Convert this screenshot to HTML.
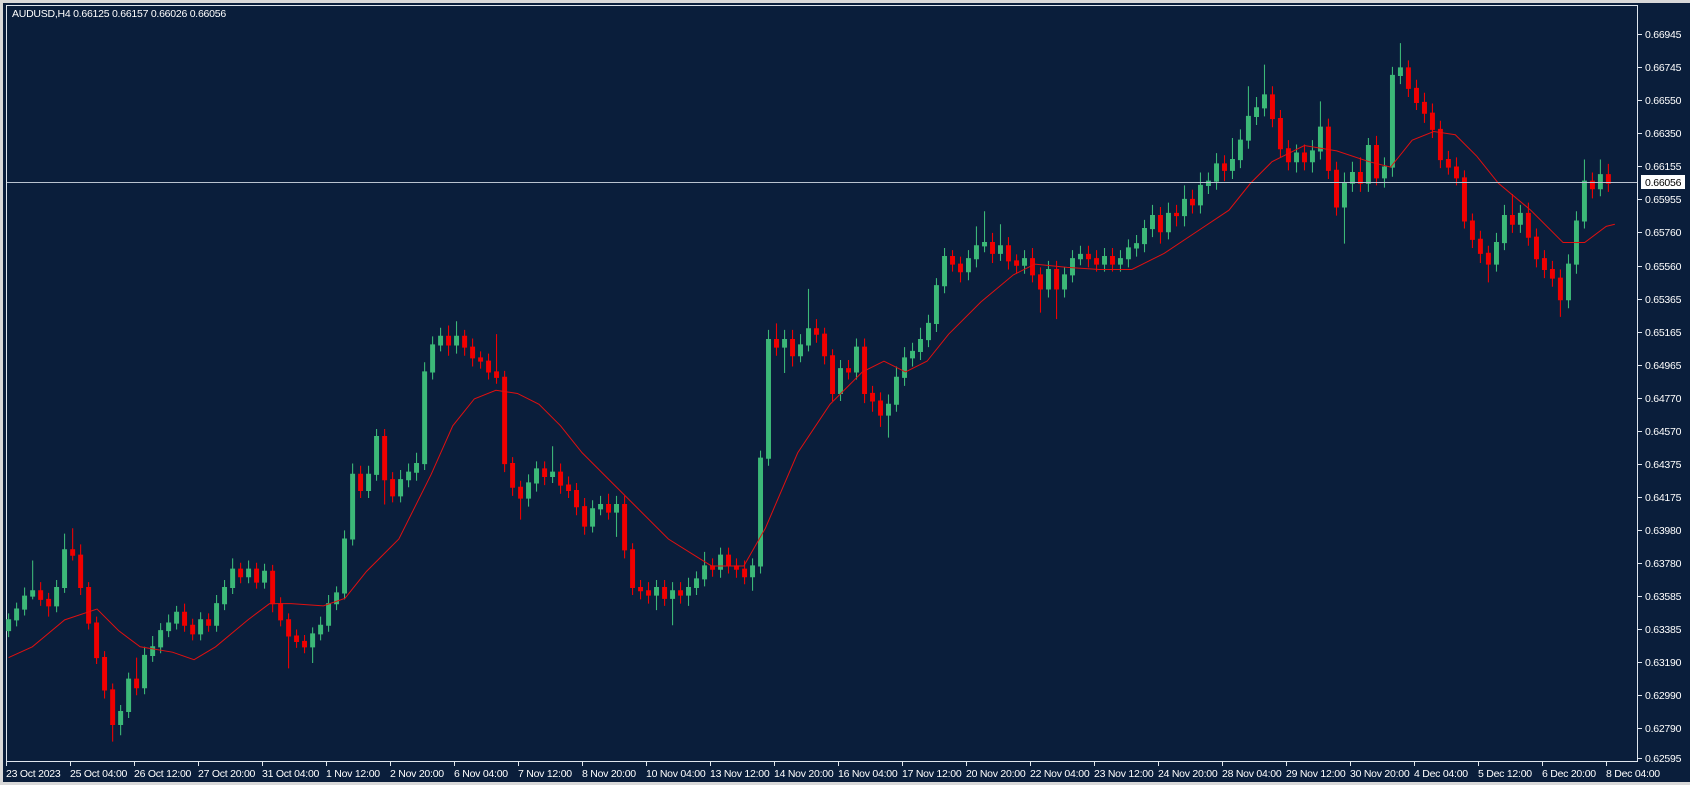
<!DOCTYPE html>
<html><head><meta charset="utf-8"><style>
html,body{margin:0;padding:0;width:1690px;height:785px;overflow:hidden;background:#d8d8d8}
svg{display:block}
text{font-family:"Liberation Sans",sans-serif;font-size:10.5px;letter-spacing:-0.25px;fill:#fff}
.g{fill:#3cb878;stroke:#3cb878;stroke-width:1}
.r{fill:#f10000;stroke:#f10000;stroke-width:1}
</style></head><body>
<svg width="1690" height="785" xmlns="http://www.w3.org/2000/svg">
<rect x="3" y="3" width="1687" height="779" fill="#0a1e3b"/>
<rect x="6.5" y="5.5" width="1631" height="756" fill="none" stroke="#dfe6ee" stroke-width="1"/>
<g transform="scale(1.078)">
<path class="g" d="M8 569V591M6.2 575h3.6V585h-3.6Z"/>
<path class="g" d="M15.4 559V581M13.6 565h3.6V575h-3.6Z"/>
<path class="g" d="M22.8 545V571M21 553h3.6V565h-3.6Z"/>
<path class="g" d="M30.3 520V556M28.5 548h3.6V553h-3.6Z"/>
<path class="r" d="M37.7 540V562M35.9 548h3.6V556h-3.6Z"/>
<path class="r" d="M45.1 550V572M43.3 556h3.6V562h-3.6Z"/>
<path class="g" d="M52.5 538V568M50.7 545h3.6V562h-3.6Z"/>
<path class="g" d="M59.9 495V550M58.1 510h3.6V545h-3.6Z"/>
<path class="r" d="M67.4 490V520M65.6 510h3.6V515h-3.6Z"/>
<path class="r" d="M74.8 505V552M73 515h3.6V545h-3.6Z"/>
<path class="r" d="M82.2 540V584M80.4 545h3.6V578h-3.6Z"/>
<path class="r" d="M89.6 572V616M87.8 578h3.6V610h-3.6Z"/>
<path class="r" d="M97 604V648M95.2 610h3.6V640h-3.6Z"/>
<path class="r" d="M104.5 634V688M102.7 640h3.6V672h-3.6Z"/>
<path class="g" d="M111.9 654V682M110.1 660h3.6V672h-3.6Z"/>
<path class="g" d="M119.3 624V666M117.5 630h3.6V660h-3.6Z"/>
<path class="r" d="M126.7 610V645M124.9 630h3.6V638h-3.6Z"/>
<path class="g" d="M134.1 600V644M132.3 608h3.6V638h-3.6Z"/>
<path class="g" d="M141.6 590V614M139.8 600h3.6V608h-3.6Z"/>
<path class="g" d="M149 578V606M147.2 585h3.6V600h-3.6Z"/>
<path class="g" d="M156.4 570V591M154.6 578h3.6V585h-3.6Z"/>
<path class="g" d="M163.8 562V584M162 568h3.6V578h-3.6Z"/>
<path class="r" d="M171.2 560V586M169.4 568h3.6V580h-3.6Z"/>
<path class="r" d="M178.7 574V594M176.9 580h3.6V588h-3.6Z"/>
<path class="g" d="M186.1 568V594M184.3 575h3.6V588h-3.6Z"/>
<path class="r" d="M193.5 569V586M191.7 575h3.6V580h-3.6Z"/>
<path class="g" d="M200.9 552V586M199.1 560h3.6V580h-3.6Z"/>
<path class="g" d="M208.3 538V566M206.5 545h3.6V560h-3.6Z"/>
<path class="g" d="M215.8 518V551M214 528h3.6V545h-3.6Z"/>
<path class="r" d="M223.2 522V541M221.4 528h3.6V535h-3.6Z"/>
<path class="g" d="M230.6 520V541M228.8 528h3.6V535h-3.6Z"/>
<path class="r" d="M238 522V546M236.2 528h3.6V540h-3.6Z"/>
<path class="g" d="M245.4 523V546M243.6 530h3.6V540h-3.6Z"/>
<path class="r" d="M252.9 524V568M251.1 530h3.6V560h-3.6Z"/>
<path class="r" d="M260.3 554V581M258.5 560h3.6V575h-3.6Z"/>
<path class="r" d="M267.7 569V620M265.9 575h3.6V590h-3.6Z"/>
<path class="r" d="M275.1 584V601M273.3 590h3.6V595h-3.6Z"/>
<path class="r" d="M282.5 589V606M280.7 595h3.6V600h-3.6Z"/>
<path class="g" d="M290 582V615M288.2 588h3.6V600h-3.6Z"/>
<path class="g" d="M297.4 572V594M295.6 580h3.6V588h-3.6Z"/>
<path class="g" d="M304.8 552V586M303 560h3.6V580h-3.6Z"/>
<path class="g" d="M312.2 544V566M310.4 550h3.6V560h-3.6Z"/>
<path class="g" d="M319.6 492V556M317.8 500h3.6V550h-3.6Z"/>
<path class="g" d="M327.1 430V506M325.3 440h3.6V500h-3.6Z"/>
<path class="r" d="M334.5 432V462M332.7 440h3.6V455h-3.6Z"/>
<path class="g" d="M341.9 432V462M340.1 440h3.6V455h-3.6Z"/>
<path class="g" d="M349.3 398V446M347.5 405h3.6V440h-3.6Z"/>
<path class="r" d="M356.8 398V468M355 405h3.6V445h-3.6Z"/>
<path class="r" d="M364.2 438V466M362.4 445h3.6V460h-3.6Z"/>
<path class="g" d="M371.6 436V466M369.8 445h3.6V460h-3.6Z"/>
<path class="g" d="M379 430V452M377.2 438h3.6V445h-3.6Z"/>
<path class="g" d="M386.4 420V446M384.6 430h3.6V438h-3.6Z"/>
<path class="g" d="M393.9 336V436M392.1 345h3.6V430h-3.6Z"/>
<path class="g" d="M401.3 312V352M399.5 320h3.6V345h-3.6Z"/>
<path class="g" d="M408.7 304V326M406.9 312h3.6V320h-3.6Z"/>
<path class="r" d="M416.1 302V330M414.3 312h3.6V320h-3.6Z"/>
<path class="g" d="M423.5 298V328M421.7 312h3.6V320h-3.6Z"/>
<path class="r" d="M431 306V330M429.2 312h3.6V322h-3.6Z"/>
<path class="r" d="M438.4 314V340M436.6 322h3.6V332h-3.6Z"/>
<path class="r" d="M445.8 326V342M444 332h3.6V335h-3.6Z"/>
<path class="r" d="M453.2 328V352M451.4 335h3.6V345h-3.6Z"/>
<path class="r" d="M460.6 310V356M458.8 345h3.6V350h-3.6Z"/>
<path class="r" d="M468.1 344V438M466.3 350h3.6V430h-3.6Z"/>
<path class="r" d="M475.5 424V460M473.7 430h3.6V452h-3.6Z"/>
<path class="r" d="M482.9 446V482M481.1 452h3.6V462h-3.6Z"/>
<path class="g" d="M490.3 440V470M488.5 448h3.6V462h-3.6Z"/>
<path class="g" d="M497.7 428V456M495.9 435h3.6V448h-3.6Z"/>
<path class="r" d="M505.2 428V450M503.4 435h3.6V442h-3.6Z"/>
<path class="g" d="M512.6 414V448M510.8 438h3.6V442h-3.6Z"/>
<path class="r" d="M520 430V458M518.2 438h3.6V450h-3.6Z"/>
<path class="r" d="M527.4 442V462M525.6 450h3.6V455h-3.6Z"/>
<path class="r" d="M534.8 448V478M533 455h3.6V470h-3.6Z"/>
<path class="r" d="M542.3 462V496M540.5 470h3.6V488h-3.6Z"/>
<path class="g" d="M549.7 464V494M547.9 472h3.6V488h-3.6Z"/>
<path class="g" d="M557.1 460V478M555.3 468h3.6V472h-3.6Z"/>
<path class="r" d="M564.5 458V482M562.7 468h3.6V475h-3.6Z"/>
<path class="g" d="M571.9 460V498M570.1 468h3.6V475h-3.6Z"/>
<path class="r" d="M579.4 460V518M577.6 468h3.6V510h-3.6Z"/>
<path class="r" d="M586.8 504V552M585 510h3.6V545h-3.6Z"/>
<path class="r" d="M594.2 538V556M592.4 545h3.6V548h-3.6Z"/>
<path class="r" d="M601.6 540V560M599.8 548h3.6V552h-3.6Z"/>
<path class="g" d="M609 538V566M607.2 545h3.6V552h-3.6Z"/>
<path class="r" d="M616.5 538V562M614.7 545h3.6V555h-3.6Z"/>
<path class="g" d="M623.9 540V580M622.1 548h3.6V555h-3.6Z"/>
<path class="r" d="M631.3 540V560M629.5 548h3.6V552h-3.6Z"/>
<path class="g" d="M638.7 536V562M636.9 545h3.6V552h-3.6Z"/>
<path class="g" d="M646.1 530V552M644.3 537h3.6V545h-3.6Z"/>
<path class="g" d="M653.6 512V544M651.8 525h3.6V537h-3.6Z"/>
<path class="r" d="M661 518V535M659.2 525h3.6V528h-3.6Z"/>
<path class="g" d="M668.4 508V536M666.6 515h3.6V528h-3.6Z"/>
<path class="r" d="M675.8 508V532M674 515h3.6V525h-3.6Z"/>
<path class="r" d="M683.2 518V536M681.4 525h3.6V528h-3.6Z"/>
<path class="r" d="M690.7 520V542M688.9 528h3.6V535h-3.6Z"/>
<path class="g" d="M698.1 518V548M696.3 525h3.6V535h-3.6Z"/>
<path class="g" d="M705.5 418V532M703.7 425h3.6V525h-3.6Z"/>
<path class="g" d="M712.9 306V432M711.1 315h3.6V425h-3.6Z"/>
<path class="r" d="M720.3 300V330M718.5 315h3.6V322h-3.6Z"/>
<path class="g" d="M727.8 306V346M726 315h3.6V322h-3.6Z"/>
<path class="r" d="M735.2 306V340M733.4 315h3.6V330h-3.6Z"/>
<path class="g" d="M742.6 310V336M740.8 320h3.6V330h-3.6Z"/>
<path class="g" d="M750 268V326M748.2 305h3.6V320h-3.6Z"/>
<path class="r" d="M757.4 296V318M755.6 305h3.6V310h-3.6Z"/>
<path class="r" d="M764.9 304V338M763.1 310h3.6V330h-3.6Z"/>
<path class="r" d="M772.3 324V372M770.5 330h3.6V365h-3.6Z"/>
<path class="g" d="M779.7 334V372M777.9 342h3.6V365h-3.6Z"/>
<path class="r" d="M787.1 334V352M785.3 342h3.6V345h-3.6Z"/>
<path class="g" d="M794.5 314V352M792.7 322h3.6V345h-3.6Z"/>
<path class="r" d="M802 314V374M800.2 322h3.6V365h-3.6Z"/>
<path class="r" d="M809.4 358V382M807.6 365h3.6V372h-3.6Z"/>
<path class="r" d="M816.8 364V396M815 372h3.6V385h-3.6Z"/>
<path class="g" d="M824.2 366V406M822.4 375h3.6V385h-3.6Z"/>
<path class="g" d="M831.6 340V382M829.8 350h3.6V375h-3.6Z"/>
<path class="g" d="M839.1 322V358M837.3 332h3.6V350h-3.6Z"/>
<path class="g" d="M846.5 318V340M844.7 326h3.6V332h-3.6Z"/>
<path class="g" d="M853.9 304V334M852.1 315h3.6V326h-3.6Z"/>
<path class="g" d="M861.3 292V322M859.5 300h3.6V315h-3.6Z"/>
<path class="g" d="M868.7 258V308M866.9 265h3.6V300h-3.6Z"/>
<path class="g" d="M876.2 230V272M874.4 238h3.6V265h-3.6Z"/>
<path class="r" d="M883.6 232V252M881.8 238h3.6V245h-3.6Z"/>
<path class="r" d="M891 238V262M889.2 245h3.6V252h-3.6Z"/>
<path class="g" d="M898.4 232V260M896.6 240h3.6V252h-3.6Z"/>
<path class="g" d="M905.8 210V248M904 228h3.6V240h-3.6Z"/>
<path class="g" d="M913.3 196V234M911.5 225h3.6V228h-3.6Z"/>
<path class="r" d="M920.7 216V244M918.9 225h3.6V235h-3.6Z"/>
<path class="g" d="M928.1 208V242M926.3 228h3.6V235h-3.6Z"/>
<path class="r" d="M935.5 220V250M933.7 228h3.6V242h-3.6Z"/>
<path class="r" d="M943 236V254M941.2 242h3.6V246h-3.6Z"/>
<path class="g" d="M950.4 232V254M948.6 240h3.6V246h-3.6Z"/>
<path class="r" d="M957.8 230V262M956 240h3.6V255h-3.6Z"/>
<path class="r" d="M965.2 248V290M963.4 255h3.6V268h-3.6Z"/>
<path class="g" d="M972.6 242V276M970.8 250h3.6V268h-3.6Z"/>
<path class="r" d="M980.1 242V296M978.3 250h3.6V268h-3.6Z"/>
<path class="g" d="M987.5 248V276M985.7 255h3.6V268h-3.6Z"/>
<path class="g" d="M994.9 232V262M993.1 240h3.6V255h-3.6Z"/>
<path class="g" d="M1002.3 228V246M1000.5 236h3.6V240h-3.6Z"/>
<path class="r" d="M1009.7 228V248M1007.9 236h3.6V240h-3.6Z"/>
<path class="r" d="M1017.2 232V252M1015.4 240h3.6V245h-3.6Z"/>
<path class="g" d="M1024.6 230V252M1022.8 238h3.6V245h-3.6Z"/>
<path class="r" d="M1032 230V252M1030.2 238h3.6V245h-3.6Z"/>
<path class="g" d="M1039.4 232V252M1037.6 240h3.6V245h-3.6Z"/>
<path class="g" d="M1046.8 222V248M1045 230h3.6V240h-3.6Z"/>
<path class="g" d="M1054.3 218V238M1052.5 226h3.6V230h-3.6Z"/>
<path class="g" d="M1061.7 204V234M1059.9 212h3.6V226h-3.6Z"/>
<path class="g" d="M1069.1 190V220M1067.3 200h3.6V212h-3.6Z"/>
<path class="r" d="M1076.5 192V226M1074.7 200h3.6V215h-3.6Z"/>
<path class="g" d="M1083.9 188V222M1082.1 198h3.6V215h-3.6Z"/>
<path class="r" d="M1091.4 190V210M1089.6 198h3.6V200h-3.6Z"/>
<path class="g" d="M1098.8 172V210M1097 185h3.6V200h-3.6Z"/>
<path class="r" d="M1106.2 176V198M1104.4 185h3.6V190h-3.6Z"/>
<path class="g" d="M1113.6 160V198M1111.8 172h3.6V190h-3.6Z"/>
<path class="g" d="M1121 160V180M1119.2 168h3.6V172h-3.6Z"/>
<path class="g" d="M1128.5 142V176M1126.7 152h3.6V168h-3.6Z"/>
<path class="r" d="M1135.9 144V168M1134.1 152h3.6V158h-3.6Z"/>
<path class="g" d="M1143.3 128V166M1141.5 148h3.6V158h-3.6Z"/>
<path class="g" d="M1150.7 120V156M1148.9 130h3.6V148h-3.6Z"/>
<path class="g" d="M1158.1 80V138M1156.3 108h3.6V130h-3.6Z"/>
<path class="g" d="M1165.6 90V116M1163.8 100h3.6V108h-3.6Z"/>
<path class="g" d="M1173 60V108M1171.2 88h3.6V100h-3.6Z"/>
<path class="r" d="M1180.4 80V118M1178.6 88h3.6V110h-3.6Z"/>
<path class="r" d="M1187.8 102V146M1186 110h3.6V138h-3.6Z"/>
<path class="r" d="M1195.2 130V158M1193.4 138h3.6V150h-3.6Z"/>
<path class="g" d="M1202.7 134V160M1200.9 142h3.6V150h-3.6Z"/>
<path class="r" d="M1210.1 134V158M1208.3 142h3.6V150h-3.6Z"/>
<path class="g" d="M1217.5 130V160M1215.7 140h3.6V150h-3.6Z"/>
<path class="g" d="M1224.9 94V148M1223.1 118h3.6V140h-3.6Z"/>
<path class="r" d="M1232.3 110V166M1230.5 118h3.6V158h-3.6Z"/>
<path class="r" d="M1239.8 150V200M1238 158h3.6V192h-3.6Z"/>
<path class="g" d="M1247.2 160V226M1245.4 170h3.6V192h-3.6Z"/>
<path class="g" d="M1254.6 150V178M1252.8 160h3.6V170h-3.6Z"/>
<path class="r" d="M1262 146V178M1260.2 160h3.6V170h-3.6Z"/>
<path class="g" d="M1269.4 128V178M1267.6 135h3.6V170h-3.6Z"/>
<path class="r" d="M1276.9 126V172M1275.1 135h3.6V165h-3.6Z"/>
<path class="g" d="M1284.3 146V174M1282.5 155h3.6V165h-3.6Z"/>
<path class="g" d="M1291.7 62V164M1289.9 70h3.6V155h-3.6Z"/>
<path class="g" d="M1299.1 40V78M1297.3 63h3.6V70h-3.6Z"/>
<path class="r" d="M1306.5 56V90M1304.7 63h3.6V82h-3.6Z"/>
<path class="r" d="M1314 74V102M1312.2 82h3.6V95h-3.6Z"/>
<path class="r" d="M1321.4 86V114M1319.6 95h3.6V105h-3.6Z"/>
<path class="r" d="M1328.8 96V128M1327 105h3.6V120h-3.6Z"/>
<path class="r" d="M1336.2 112V156M1334.4 120h3.6V148h-3.6Z"/>
<path class="r" d="M1343.6 140V162M1341.8 148h3.6V155h-3.6Z"/>
<path class="r" d="M1351.1 146V172M1349.3 155h3.6V165h-3.6Z"/>
<path class="r" d="M1358.5 158V212M1356.7 165h3.6V205h-3.6Z"/>
<path class="r" d="M1365.9 198V230M1364.1 205h3.6V222h-3.6Z"/>
<path class="r" d="M1373.3 214V244M1371.5 222h3.6V235h-3.6Z"/>
<path class="r" d="M1380.7 228V262M1378.9 235h3.6V245h-3.6Z"/>
<path class="g" d="M1388.2 216V252M1386.4 225h3.6V245h-3.6Z"/>
<path class="g" d="M1395.6 190V232M1393.8 200h3.6V225h-3.6Z"/>
<path class="r" d="M1403 180V216M1401.2 200h3.6V208h-3.6Z"/>
<path class="g" d="M1410.4 190V216M1408.6 198h3.6V208h-3.6Z"/>
<path class="r" d="M1417.8 188V228M1416 198h3.6V220h-3.6Z"/>
<path class="r" d="M1425.3 212V248M1423.5 220h3.6V240h-3.6Z"/>
<path class="r" d="M1432.7 232V258M1430.9 240h3.6V250h-3.6Z"/>
<path class="r" d="M1440.1 242V266M1438.3 250h3.6V258h-3.6Z"/>
<path class="r" d="M1447.5 250V294M1445.7 258h3.6V278h-3.6Z"/>
<path class="g" d="M1455 236V286M1453.2 245h3.6V278h-3.6Z"/>
<path class="g" d="M1462.4 196V254M1460.6 205h3.6V245h-3.6Z"/>
<path class="g" d="M1469.8 148V212M1468 168h3.6V205h-3.6Z"/>
<path class="r" d="M1477.2 160V184M1475.4 168h3.6V175h-3.6Z"/>
<path class="g" d="M1484.6 148V182M1482.8 162h3.6V175h-3.6Z"/>
<path class="r" d="M1492 152V178M1490.2 162h3.6V170h-3.6Z"/>
<path d="M8 610L30 600L60 575L90 565L110 585L130 600L160 605L180 612L200 600L230 575L250 560L270 560L300 562L320 555L340 530L370 500L400 440L420 395L440 370L460 362L480 365L500 375L520 395L540 420L570 450L590 470L620 500L660 525L690 525L710 490L740 420L770 375L800 345L820 335L840 345L860 335L880 310L910 280L940 255L960 245L990 248L1020 250L1050 250L1080 235L1110 215L1140 195L1160 170L1180 150L1210 135L1240 140L1270 150L1290 155L1310 130L1330 122L1350 125L1370 145L1390 170L1420 195L1450 225L1470 225L1490 210L1498 208" fill="none" stroke="#e01010" stroke-width="0.93"/>
</g>
<line x1="7" y1="182.5" x2="1637" y2="182.5" stroke="#b9c3cf" stroke-width="1"/>
<text x="12" y="17">AUDUSD,H4  0.66125 0.66157 0.66026 0.66056</text>
<g stroke="#dfe6ee">
<line x1="1638" y1="34.5" x2="1642" y2="34.5"/><line x1="1638" y1="67.5" x2="1642" y2="67.5"/><line x1="1638" y1="100.5" x2="1642" y2="100.5"/><line x1="1638" y1="133.5" x2="1642" y2="133.5"/><line x1="1638" y1="166.5" x2="1642" y2="166.5"/><line x1="1638" y1="199.5" x2="1642" y2="199.5"/><line x1="1638" y1="232.5" x2="1642" y2="232.5"/><line x1="1638" y1="266.5" x2="1642" y2="266.5"/><line x1="1638" y1="299.5" x2="1642" y2="299.5"/><line x1="1638" y1="332.5" x2="1642" y2="332.5"/><line x1="1638" y1="365.5" x2="1642" y2="365.5"/><line x1="1638" y1="398.5" x2="1642" y2="398.5"/><line x1="1638" y1="431.5" x2="1642" y2="431.5"/><line x1="1638" y1="464.5" x2="1642" y2="464.5"/><line x1="1638" y1="497.5" x2="1642" y2="497.5"/><line x1="1638" y1="530.5" x2="1642" y2="530.5"/><line x1="1638" y1="563.5" x2="1642" y2="563.5"/><line x1="1638" y1="596.5" x2="1642" y2="596.5"/><line x1="1638" y1="629.5" x2="1642" y2="629.5"/><line x1="1638" y1="662.5" x2="1642" y2="662.5"/><line x1="1638" y1="695.5" x2="1642" y2="695.5"/><line x1="1638" y1="728.5" x2="1642" y2="728.5"/><line x1="1638" y1="758.5" x2="1642" y2="758.5"/>
</g>
<g>
<text x="1645" y="38">0.66945</text><text x="1645" y="71">0.66745</text><text x="1645" y="104">0.66550</text><text x="1645" y="137">0.66350</text><text x="1645" y="170">0.66155</text><text x="1645" y="203">0.65955</text><text x="1645" y="236">0.65760</text><text x="1645" y="270">0.65560</text><text x="1645" y="303">0.65365</text><text x="1645" y="336">0.65165</text><text x="1645" y="369">0.64965</text><text x="1645" y="402">0.64770</text><text x="1645" y="435">0.64570</text><text x="1645" y="468">0.64375</text><text x="1645" y="501">0.64175</text><text x="1645" y="534">0.63980</text><text x="1645" y="567">0.63780</text><text x="1645" y="600">0.63585</text><text x="1645" y="633">0.63385</text><text x="1645" y="666">0.63190</text><text x="1645" y="699">0.62990</text><text x="1645" y="732">0.62790</text><text x="1645" y="762">0.62595</text>
</g>
<rect x="1641" y="175" width="44" height="14" fill="#fff"/><text x="1645" y="186" style="fill:#000">0.66056</text>
<g stroke="#dfe6ee">
<line x1="6.5" y1="762" x2="6.5" y2="766"/><line x1="70.5" y1="762" x2="70.5" y2="766"/><line x1="134.5" y1="762" x2="134.5" y2="766"/><line x1="198.5" y1="762" x2="198.5" y2="766"/><line x1="262.5" y1="762" x2="262.5" y2="766"/><line x1="326.5" y1="762" x2="326.5" y2="766"/><line x1="390.5" y1="762" x2="390.5" y2="766"/><line x1="454.5" y1="762" x2="454.5" y2="766"/><line x1="518.5" y1="762" x2="518.5" y2="766"/><line x1="582.5" y1="762" x2="582.5" y2="766"/><line x1="646.5" y1="762" x2="646.5" y2="766"/><line x1="710.5" y1="762" x2="710.5" y2="766"/><line x1="774.5" y1="762" x2="774.5" y2="766"/><line x1="838.5" y1="762" x2="838.5" y2="766"/><line x1="902.5" y1="762" x2="902.5" y2="766"/><line x1="966.5" y1="762" x2="966.5" y2="766"/><line x1="1030.5" y1="762" x2="1030.5" y2="766"/><line x1="1094.5" y1="762" x2="1094.5" y2="766"/><line x1="1158.5" y1="762" x2="1158.5" y2="766"/><line x1="1222.5" y1="762" x2="1222.5" y2="766"/><line x1="1286.5" y1="762" x2="1286.5" y2="766"/><line x1="1350.5" y1="762" x2="1350.5" y2="766"/><line x1="1414.5" y1="762" x2="1414.5" y2="766"/><line x1="1478.5" y1="762" x2="1478.5" y2="766"/><line x1="1542.5" y1="762" x2="1542.5" y2="766"/><line x1="1606.5" y1="762" x2="1606.5" y2="766"/>
</g>
<g>
<text x="6" y="777">23 Oct 2023</text><text x="70" y="777">25 Oct 04:00</text><text x="134" y="777">26 Oct 12:00</text><text x="198" y="777">27 Oct 20:00</text><text x="262" y="777">31 Oct 04:00</text><text x="326" y="777">1 Nov 12:00</text><text x="390" y="777">2 Nov 20:00</text><text x="454" y="777">6 Nov 04:00</text><text x="518" y="777">7 Nov 12:00</text><text x="582" y="777">8 Nov 20:00</text><text x="646" y="777">10 Nov 04:00</text><text x="710" y="777">13 Nov 12:00</text><text x="774" y="777">14 Nov 20:00</text><text x="838" y="777">16 Nov 04:00</text><text x="902" y="777">17 Nov 12:00</text><text x="966" y="777">20 Nov 20:00</text><text x="1030" y="777">22 Nov 04:00</text><text x="1094" y="777">23 Nov 12:00</text><text x="1158" y="777">24 Nov 20:00</text><text x="1222" y="777">28 Nov 04:00</text><text x="1286" y="777">29 Nov 12:00</text><text x="1350" y="777">30 Nov 20:00</text><text x="1414" y="777">4 Dec 04:00</text><text x="1478" y="777">5 Dec 12:00</text><text x="1542" y="777">6 Dec 20:00</text><text x="1606" y="777">8 Dec 04:00</text>
</g>
</svg>
</body></html>
